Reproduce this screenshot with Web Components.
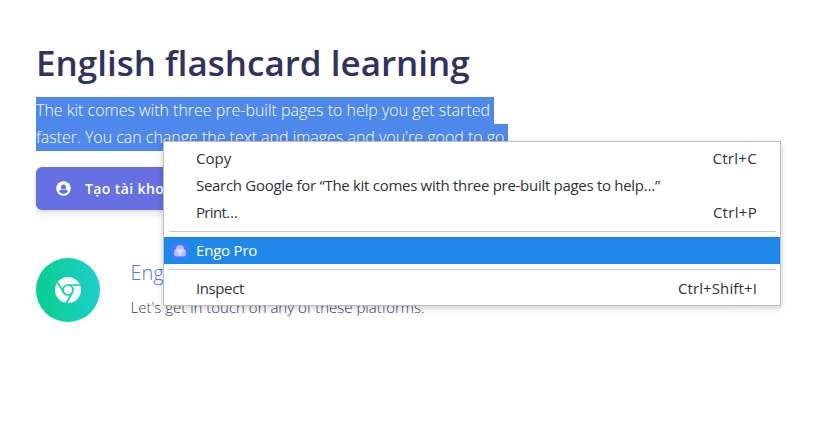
<!DOCTYPE html>
<html lang="en"><head><meta charset="utf-8"><title>English flashcard learning</title>
<style>html,body{margin:0;background:#fff;font-family:"Open Sans",sans-serif;overflow:hidden}</style></head>
<body><engo-page></engo-page>
<script>
const define=(name,html)=>customElements.define(name,class extends HTMLElement{
  constructor(){super();this.attachShadow({mode:'open'}).innerHTML=html;}
});
define('hero-heading',`<style>:host{display:block;color:#32325d;font-size:35px;line-height:54px;height:54px;font-weight:600;white-space:nowrap}</style><slot></slot>`);
define('selected-line',`<style>:host{display:block;width:max-content;box-sizing:border-box;height:27px;line-height:27px;font-size:16px;letter-spacing:-.012px;font-weight:300;color:#fff;background:#4d88ea;padding-right:4px;white-space:nowrap}:host([last]){padding-right:0;letter-spacing:-.02px}</style><slot></slot>`);
define('account-button',`<style>:host{display:flex;align-items:center;gap:14px;box-sizing:border-box;width:196px;height:43px;padding:0 20px;border-radius:6px;background:#6670e0;color:#fff;font-size:14px;font-weight:600;letter-spacing:.4px;white-space:nowrap;box-shadow:0 4px 6px rgba(50,50,93,.11),0 1px 3px rgba(0,0,0,.08)}svg{display:block;flex:none}</style>
<svg width="15" height="15" viewBox="0 0 30 30"><circle cx="15" cy="15" r="14.5" fill="#fff"/><circle cx="15" cy="12" r="5" fill="#6670e0"/><path d="M6 21c2-3 4-4 6-4 2 1 4 1 6 0 2 0 4 1 6 4-5 6-13 6-18 0z" fill="#6670e0"/></svg><slot></slot>`);
define('chrome-badge',`<style>:host{display:grid;place-items:center;width:64px;height:64px;border-radius:50%;background:linear-gradient(87deg,#08ce8c,#1fcfce)}svg{display:block}</style>
<svg width="26" height="26" viewBox="0 0 26 26"><circle cx="13" cy="13" r="13" fill="#fff"/><g fill="none" stroke="#15cfad" stroke-width="1.7"><circle cx="13" cy="13" r="5"/><path d="M13 8H25M8.7 15.5L2.5 5.5M17.3 15.5L11.5 26"/></g></svg>`);
define('contact-row',`<style>:host{display:flex;gap:30.5px;height:64px}.text{display:flex;flex-direction:column;white-space:nowrap;font-weight:300}.name{height:30px;line-height:30px;font-size:20px;color:#5e72e4}.note{margin-top:5px;height:28px;line-height:28px;font-size:15px;color:#3d3d69}</style><chrome-badge></chrome-badge><div class="text"><div class="name"><slot name="name"></slot></div><div class="note"><slot></slot></div></div>`);
define('menu-item',`<style>:host{display:flex;align-items:center;box-sizing:border-box;height:27px;padding:0 23px 0 8px;color:#303336;white-space:nowrap}:host([active]){background:#2188eb;color:#fff}.icon{display:flex;width:24px;flex:none}.label{flex:1}.label,::slotted([slot=key]){padding-bottom:1px}</style><span class="icon"><slot name="icon"></slot></span><span class="label"><slot></slot></span><slot name="key"></slot>`);
define('menu-rule',`<style>:host{display:block;height:1px;background:#c9c9c9;margin:5px 4px 5px 5px}</style>`);
define('engo-icon',`<style>:host{display:block;width:16px;height:16px}svg{display:block}</style><svg width="16" height="16" viewBox="0 0 16 16"><rect x=".5" y=".5" width="15" height="15" rx="3.5" fill="#5271ff"/><g fill="#e0e4ff" fill-opacity=".68"><circle cx="8" cy="5.9" r="3.9"/><circle cx="5.7" cy="9.7" r="3.9"/><circle cx="10.3" cy="9.7" r="3.9"/></g></svg>`);
define('context-menu',`<style>:host{display:block;box-sizing:border-box;width:618px;height:165px;padding-top:3px;border:1px solid #bebebe;background:#fff;box-shadow:0 2px 7px rgba(0,0,0,.2);font:15px "Open Sans",sans-serif}.search{letter-spacing:-.29px}.print{letter-spacing:-.65px}.engo{letter-spacing:-.2px}.inspect{letter-spacing:-.4px}.short{letter-spacing:.3px}.long{letter-spacing:.12px}</style>
<menu-item>Copy<span slot="key" class="short">Ctrl+C</span></menu-item>
<menu-item class="search">Search Google for “The kit comes with three pre-built pages to help…”</menu-item>
<menu-item><span class="print">Print…</span><span slot="key" class="short">Ctrl+P</span></menu-item>
<menu-rule></menu-rule>
<menu-item active class="engo"><engo-icon slot="icon"></engo-icon>Engo Pro</menu-item>
<menu-rule></menu-rule>
<menu-item><span class="inspect">Inspect</span><span slot="key" class="long">Ctrl+Shift+I</span></menu-item>`);
define('engo-page',`<style>:host{display:block;position:relative;box-sizing:border-box;width:820px;height:442px;padding:36px 36px 0}.copy{margin-top:7px}account-button{margin-top:16px}contact-row{margin-top:48px}context-menu{position:absolute;left:163px;top:141px}</style>
<hero-heading>English flashcard learning</hero-heading>
<div class="copy"><selected-line>The kit comes with three pre-built pages to help you get started</selected-line><selected-line last>faster. You can change the text and images and you're good to go.</selected-line></div>
<account-button>Tạo tài khoản</account-button>
<contact-row><span slot="name">Engo</span>Let's get in touch on any of these platforms.</contact-row>
<context-menu></context-menu>`);
</script></body></html>
